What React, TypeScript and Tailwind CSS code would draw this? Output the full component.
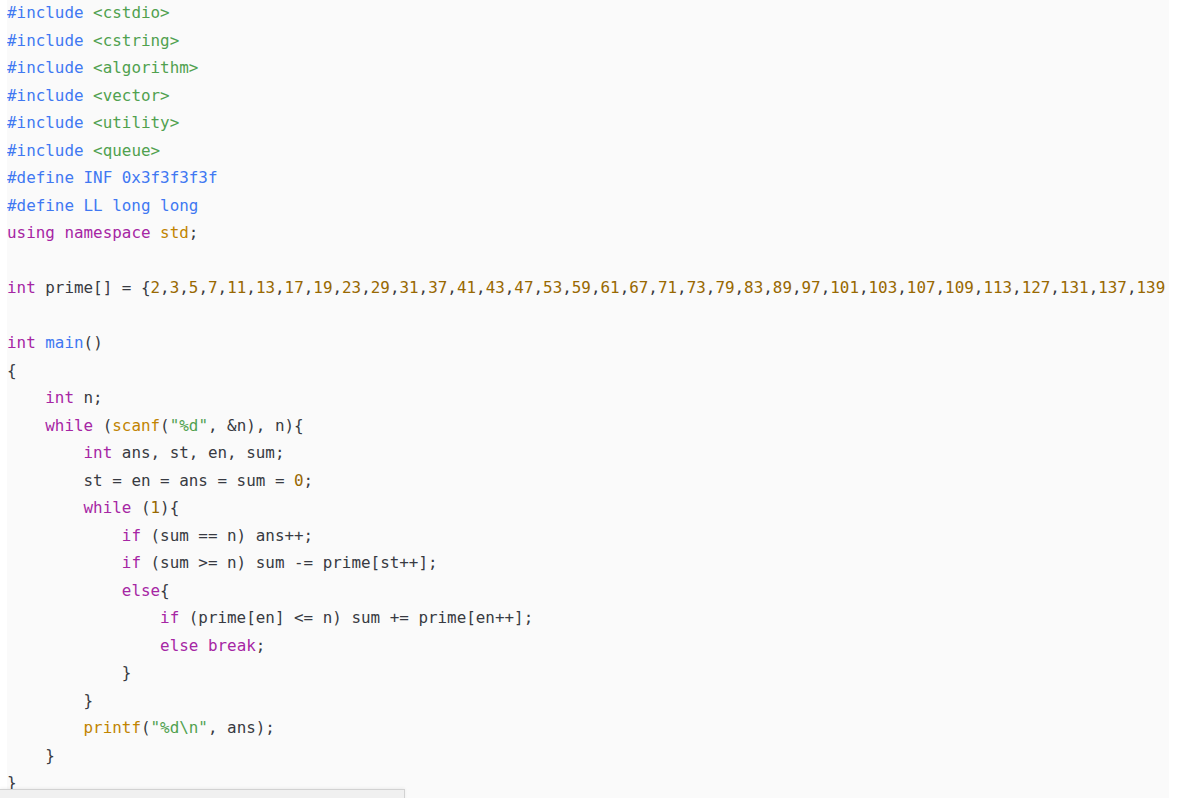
import React from "react";

const K = ({ children }: { children: React.ReactNode }) => <span className="text-[#a626a4]">{children}</span>;
const M = ({ children }: { children: React.ReactNode }) => <span className="text-[#4078f2]">{children}</span>;
const S = ({ children }: { children: React.ReactNode }) => <span className="text-[#50a14f]">{children}</span>;
const N = ({ children }: { children: React.ReactNode }) => <span className="text-[#986801]">{children}</span>;
const B = ({ children }: { children: React.ReactNode }) => <span className="text-[#c18401]">{children}</span>;

const primes = [
  2, 3, 5, 7, 11, 13, 17, 19, 23, 29, 31, 37, 41, 43, 47, 53, 59, 61, 67, 71, 73, 79, 83, 89, 97, 101, 103, 107, 109,
  113, 127, 131, 137, 139,
];

export default function App() {
  return (
    <div className="relative h-[798px] w-[1181px] overflow-hidden bg-white">
      <div className="ml-[7px] h-[798px] w-[1162px] overflow-hidden bg-[#fafafa]">
        <pre
          className="mt-[-1px] whitespace-pre text-[15.9px] leading-[27.5px] text-[#383a42]"
          style={{ fontFamily: '"DejaVu Sans Mono", "Liberation Mono", monospace' }}
        >
          <M>#include </M><S>&lt;cstdio&gt;</S>{"\n"}
          <M>#include </M><S>&lt;cstring&gt;</S>{"\n"}
          <M>#include </M><S>&lt;algorithm&gt;</S>{"\n"}
          <M>#include </M><S>&lt;vector&gt;</S>{"\n"}
          <M>#include </M><S>&lt;utility&gt;</S>{"\n"}
          <M>#include </M><S>&lt;queue&gt;</S>{"\n"}
          <M>#define INF 0x3f3f3f3f</M>{"\n"}
          <M>#define LL long long</M>{"\n"}
          <K>using</K> <K>namespace</K> <B>std</B>;{"\n"}
          {"\n"}
          <K>int</K> prime[] = {"{"}
          {primes.map((p, i) => (
            <React.Fragment key={p}>
              <N>{p}</N>
              {i < primes.length - 1 ? "," : ""}
            </React.Fragment>
          ))}
          {"\n"}
          {"\n"}
          <K>int</K> <M>main</M>(){"\n"}
          {"{\n"}
          {"    "}<K>int</K> n;{"\n"}
          {"    "}<K>while</K> (<B>scanf</B>(<S>"%d"</S>, &amp;n), n){"{\n"}
          {"        "}<K>int</K> ans, st, en, sum;{"\n"}
          {"        "}st = en = ans = sum = <N>0</N>;{"\n"}
          {"        "}<K>while</K> (<N>1</N>){"{\n"}
          {"            "}<K>if</K> (sum == n) ans++;{"\n"}
          {"            "}<K>if</K> (sum &gt;= n) sum -= prime[st++];{"\n"}
          {"            "}<K>else</K>{"{\n"}
          {"                "}<K>if</K> (prime[en] &lt;= n) sum += prime[en++];{"\n"}
          {"                "}<K>else</K> <K>break</K>;{"\n"}
          {"            }\n"}
          {"        }\n"}
          {"        "}<B>printf</B>(<S>"%d\n"</S>, ans);{"\n"}
          {"    }\n"}
          {"}\n"}
        </pre>
      </div>
      <div className="absolute left-0 top-[789px] h-[20px] w-[405px] border-r border-t border-[#d2d2d2] bg-[#f0f0f0] shadow-[0_-1px_3px_rgba(0,0,0,0.06)]" />
    </div>
  );
}
